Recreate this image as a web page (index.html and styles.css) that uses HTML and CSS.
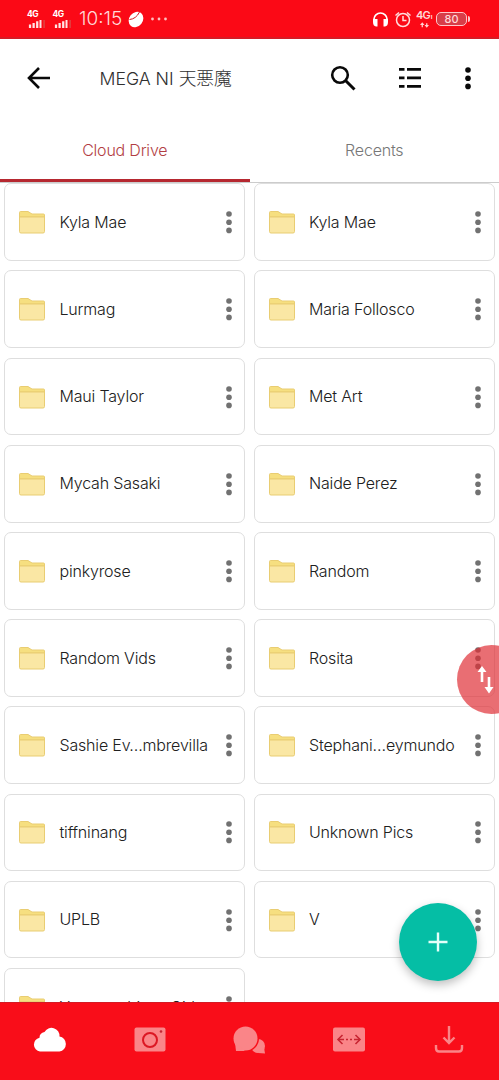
FILE: index.html
```html
<!DOCTYPE html>
<html lang="en">
<head>
<meta charset="utf-8">
<title>Cloud Drive</title>
<link rel="stylesheet" href="styles.css">
</head>
<body>
<svg class="defs" aria-hidden="true">
  <symbol id="folder" viewBox="0 0 28 26">
    <path d="M1.500 6V3.500Q1.500 2.500 2.500 2.500H10L14 5H25.500Q26.500 5 26.500 6V8H1.500Z" fill="#f6df80" stroke="#e9cd72"/>
    <path d="M1.500 8H26.500V22.500Q26.500 24 25 24H3Q1.500 24 1.500 22.500Z" fill="#fae7a4" stroke="#e9cd72"/>
  </symbol>
  <symbol id="dots" viewBox="0 0 8 24">
    <circle cx="4" cy="4" r="2.800"/><circle cx="4" cy="12.200" r="2.800"/><circle cx="4" cy="20.400" r="2.800"/>
  </symbol>
  <symbol id="signal" viewBox="0 0 20 10">
    <path d="M1 6h2.500v4H1zM5 4.500h2.500V10H5zM9 2.500h2.500V10H9zM12.800 1h2.200v9h-2.200z" fill="#ffe5e5"/>
    <path d="M17 1h1.800v9H17z" fill="#e04040"/>
  </symbol>
</svg>
<div class="phone">
  <header class="status">
    <div class="sim"><span>4G</span><svg viewBox="0 0 20 10"><use href="#signal"/></svg></div>
    <div class="sim"><span>4G</span><svg viewBox="0 0 20 10"><use href="#signal"/></svg></div>
    <span class="clock">10:15</span>
    <svg class="ball" viewBox="0 0 16 17"><ellipse cx="8" cy="8.500" rx="6.800" ry="8.200" transform="rotate(38 8 8.500)" fill="#fff"/><path d="M1.500 8.500Q8 8 11.500 1" fill="none" stroke="#d51420" stroke-width="1"/></svg>
    <svg class="more" viewBox="0 0 18 4" fill="#ffc0c0"><circle cx="2.500" cy="2" r="1.400"/><circle cx="9" cy="2" r="1.400"/><circle cx="15.500" cy="2" r="1.400"/></svg>
    <span class="spacer"></span>
    <svg class="headset" viewBox="0 0 17 17"><path d="M2 11V8a6.500 6 0 0 1 13 0v3" fill="none" stroke="#fff" stroke-width="1.700"/><path d="M1 8h4.500v7.500H4Q1 15 1 11zM16 8h-4.500v7.500H13Q16 15 16 11z" fill="#fff"/></svg>
    <svg class="alarm" viewBox="0 0 18 17" fill="none" stroke="#ffdede" stroke-width="1.500"><circle cx="9" cy="9" r="6.500"/><path d="M9 5v4.500h3.500M1.500 4.500 5 1.500M13 1.500l3.500 3"/></svg>
    <div class="net"><span>4G<i>ı</i></span><svg viewBox="0 0 10 6" fill="#ffd5d5"><path d="M2.500 0 5 3H3.200v2.500H1.800V3H0zM7.500 6 5 3h1.800V1h1.400v2H10z"/></svg></div>
    <div class="battery"><span>80</span></div>
  </header>
  <div class="toolbar">
    <svg class="back" viewBox="0 0 24 24"><path d="M23 12H3M12 2 2 12l10 10" fill="none" stroke="#090909" stroke-width="2.600"/></svg>
    <h1>MEGA NI 天悪魔</h1>
    <svg class="search" viewBox="0 0 26 26" fill="none" stroke="#090909"><circle cx="10" cy="10" r="7.800" stroke-width="2.600"/><path d="m15.500 15.500 9 9" stroke-width="3"/></svg>
    <svg class="list" viewBox="0 0 24 22" fill="#090909"><path d="M1 1h5.500v2.700H1zM9 1h14v2.700H9zM1 9.500h5.500v2.700H1zM9 9.500h14v2.700H9zM1 18h5.500v2.700H1zM9 18h14v2.700H9z"/></svg>
    <svg class="menu" viewBox="0 0 8 24"><use href="#dots"/></svg>
  </div>
  <nav class="tabs"><span class="tab active">Cloud Drive</span><span class="tab">Recents</span></nav>
  <main class="grid">
    <article class="card"><svg class="folder"><use href="#folder"/></svg><span class="name">Kyla Mae</span><svg class="dots"><use href="#dots"/></svg></article>
    <article class="card"><svg class="folder"><use href="#folder"/></svg><span class="name">Kyla Mae</span><svg class="dots"><use href="#dots"/></svg></article>
    <article class="card"><svg class="folder"><use href="#folder"/></svg><span class="name">Lurmag</span><svg class="dots"><use href="#dots"/></svg></article>
    <article class="card"><svg class="folder"><use href="#folder"/></svg><span class="name">Maria Follosco</span><svg class="dots"><use href="#dots"/></svg></article>
    <article class="card"><svg class="folder"><use href="#folder"/></svg><span class="name">Maui Taylor</span><svg class="dots"><use href="#dots"/></svg></article>
    <article class="card"><svg class="folder"><use href="#folder"/></svg><span class="name">Met Art</span><svg class="dots"><use href="#dots"/></svg></article>
    <article class="card"><svg class="folder"><use href="#folder"/></svg><span class="name">Mycah Sasaki</span><svg class="dots"><use href="#dots"/></svg></article>
    <article class="card"><svg class="folder"><use href="#folder"/></svg><span class="name">Naide Perez</span><svg class="dots"><use href="#dots"/></svg></article>
    <article class="card"><svg class="folder"><use href="#folder"/></svg><span class="name">pinkyrose</span><svg class="dots"><use href="#dots"/></svg></article>
    <article class="card"><svg class="folder"><use href="#folder"/></svg><span class="name">Random</span><svg class="dots"><use href="#dots"/></svg></article>
    <article class="card"><svg class="folder"><use href="#folder"/></svg><span class="name">Random Vids</span><svg class="dots"><use href="#dots"/></svg></article>
    <article class="card"><svg class="folder"><use href="#folder"/></svg><span class="name">Rosita</span><svg class="dots"><use href="#dots"/></svg></article>
    <article class="card"><svg class="folder"><use href="#folder"/></svg><span class="name">Sashie Ev…mbrevilla</span><svg class="dots"><use href="#dots"/></svg></article>
    <article class="card"><svg class="folder"><use href="#folder"/></svg><span class="name">Stephani…eymundo</span><svg class="dots"><use href="#dots"/></svg></article>
    <article class="card"><svg class="folder"><use href="#folder"/></svg><span class="name">tiffninang</span><svg class="dots"><use href="#dots"/></svg></article>
    <article class="card"><svg class="folder"><use href="#folder"/></svg><span class="name">Unknown Pics</span><svg class="dots"><use href="#dots"/></svg></article>
    <article class="card"><svg class="folder"><use href="#folder"/></svg><span class="name">UPLB</span><svg class="dots"><use href="#dots"/></svg></article>
    <article class="card"><svg class="folder"><use href="#folder"/></svg><span class="name">V</span><svg class="dots"><use href="#dots"/></svg></article>
    <article class="card"><svg class="folder"><use href="#folder"/></svg><span class="name">Yamaguchians Girl</span><svg class="dots"><use href="#dots"/></svg></article>
  </main>
  <footer class="bottom">
    <svg viewBox="0 0 36 28" fill="#fff"><path d="M8 25.500a7 7 0 0 1-.5-13.800Q7.500 7 12.500 6A8 8 0 0 1 27.500 10.500a7.600 7.600 0 0 1 0 15z"/></svg>
    <svg viewBox="0 0 36 28"><rect x="2.500" y="1.500" width="31" height="24" rx="2" fill="#fa8588"/><circle cx="18" cy="14" r="7" fill="none" stroke="#dc1723" stroke-width="2"/><circle cx="29" cy="5.500" r="1.300" fill="#c32732"/></svg>
    <svg viewBox="0 0 36 28" fill="#fa8588"><circle cx="27" cy="20" r="7"/><path d="m27 27 7 .5-1-6z"/><circle cx="15" cy="12.500" r="13" fill="#f90d19"/><circle cx="14.500" cy="12.500" r="12"/><path d="M4 16.500 5 25h9z"/></svg>
    <svg viewBox="0 0 36 28"><rect x="2" y="1.500" width="32" height="24" rx="2" fill="#fa8588"/><path d="m11.500 9-4.500 4.500 4.500 4.500M24.500 9l4.500 4.500-4.500 4.500" fill="none" stroke="#c72531" stroke-width="1.600"/><path d="M7 13.500h6m2 0h2m2 0h2m2 0h6" stroke="#c72531" stroke-width="1.600"/></svg>
    <svg viewBox="0 0 36 28" fill="none" stroke="#fa8588" stroke-width="2.400"><path d="M18 0v17M12.500 11.500l5.500 5.500 5.500-5.500M5 19v3q0 3.500 3 3.500h20q3 0 3-3.500v-3"/></svg>
  </footer>
  <div class="transfer"><svg viewBox="0 0 16 28" fill="#fff"><path d="M5 0 9.500 6H6.300v10H3.700V6H.5zM12 27.500 7.500 21h3.200V11h2.600v10h3.200z"/></svg></div>
  <div class="fab"><svg viewBox="0 0 20 20"><path d="M10 .5v19M.5 10h19" stroke="#e4fff9" stroke-width="2.400"/></svg></div>
</div>
</body>
</html>
```
FILE: styles.css
```css
* { box-sizing: border-box; }
body { margin: 0; background: #fff; font-family: Inter, "Noto Sans CJK JP", sans-serif; font-weight: 300; }
svg { display: block; flex: none; }
.defs { position: absolute; width: 0; height: 0; }
.phone { position: relative; width: 499px; height: 1080px; overflow: hidden; display: flex; flex-direction: column; }
.status { height: 39px; flex: none; background: #fb0916; border-bottom: 2px solid #d51b25; color: #ffd9d9; display: flex; align-items: center; padding: 1px 32px 0 27px; }
.sim { width: 25.500px; display: flex; flex-direction: column; gap: 1px; }
.sim span { font-size: 8.500px; line-height: 7px; font-weight: 700; letter-spacing: -.4px; color: #fff; }
.sim svg { width: 20px; height: 9px; }
.clock { width: 50px; font-size: 19px; letter-spacing: 0; line-height: 36px; padding-left: 1px; }
.ball { width: 16px; height: 17px; }
.more { width: 18px; height: 4px; margin-left: 6px; }
.spacer { flex: 1; }
.headset { width: 17px; height: 17px; margin-right: 5px; }
.alarm { width: 18px; height: 17px; margin-right: 4px; }
.net { width: 20px; }
.net span { display: block; font-size: 11px; line-height: 9px; font-weight: 600; letter-spacing: -.9px; white-space: nowrap; }
.net i { font-size: 7px; font-style: normal; margin-left: 1px; }
.net svg { width: 9px; height: 6px; margin: 1px 0 0 4px; }
.battery { position: relative; width: 31px; height: 14px; border: 1.500px solid #ffc6c8; border-radius: 5px; background: #d83d48; text-align: center; font-size: 11px; line-height: 12px; font-weight: 500; }
.battery::after { content: ""; position: absolute; right: -4px; top: 3px; width: 2px; height: 6px; border-radius: 0 2px 2px 0; background: #ffc6c8; }
.toolbar { height: 77px; flex: none; display: flex; align-items: center; padding: 0 27px 0 27px; }
.back { width: 24px; height: 24px; }
h1 { flex: 1; margin: 0 0 0 48.500px; padding-bottom: 2px; font-size: 17.700px; font-weight: 300; color: #303030; letter-spacing: 0; white-space: nowrap; }
.search { width: 26px; height: 26px; margin-right: 42px; }
.list { width: 24px; height: 22px; margin-right: 42px; }
.menu { width: 8px; height: 24px; fill: #090909; }
.tabs { height: 67px; flex: none; display: flex; border-bottom: 1px solid #ccc; }
.tab { flex: 1; text-align: center; font-size: 16px; line-height: 69px; letter-spacing: -.2px; color: #777; }
.active { color: #b23e43; border-bottom: 3px solid #b62830; }
.grid { height: 819px; flex: none; overflow: hidden; display: grid; grid-template-columns: 241px 241px; grid-auto-rows: 77.700px; gap: 9.500px 8.500px; padding: .3px 4px 0; align-content: start; }
.card { display: flex; align-items: center; padding: 0 11.500px 0 13px; border: 1.500px solid #dedede; border-radius: 7px; }
.folder { width: 28px; height: 26px; }
.name { flex: 1; margin-left: 13.500px; font-size: 16px; line-height: 22px; letter-spacing: -.18px; white-space: nowrap; color: #202020; padding-bottom: .5px; }
.dots { width: 8px; height: 24px; fill: #717171; }
.bottom { height: 78px; flex: none; background: #f90d19; border-top: 1px solid #d51a24; display: flex; justify-content: space-around; align-items: center; padding-bottom: 3px; }
.bottom svg { width: 36px; height: 28px; }
.transfer { position: absolute; left: 457px; top: 645px; width: 69px; height: 69px; border-radius: 50%; background: rgba(224,48,56,.7); padding: 21px 0 0 19.500px; }
.transfer svg { width: 16px; height: 28px; overflow: visible; }
.fab { position: absolute; left: 399px; top: 903px; width: 78px; height: 78px; border-radius: 50%; background: #05bea5; display: flex; align-items: center; justify-content: center; box-shadow: 0 4px 10px rgba(0,0,0,.25); }
.fab svg { width: 20px; height: 20px; }
```
